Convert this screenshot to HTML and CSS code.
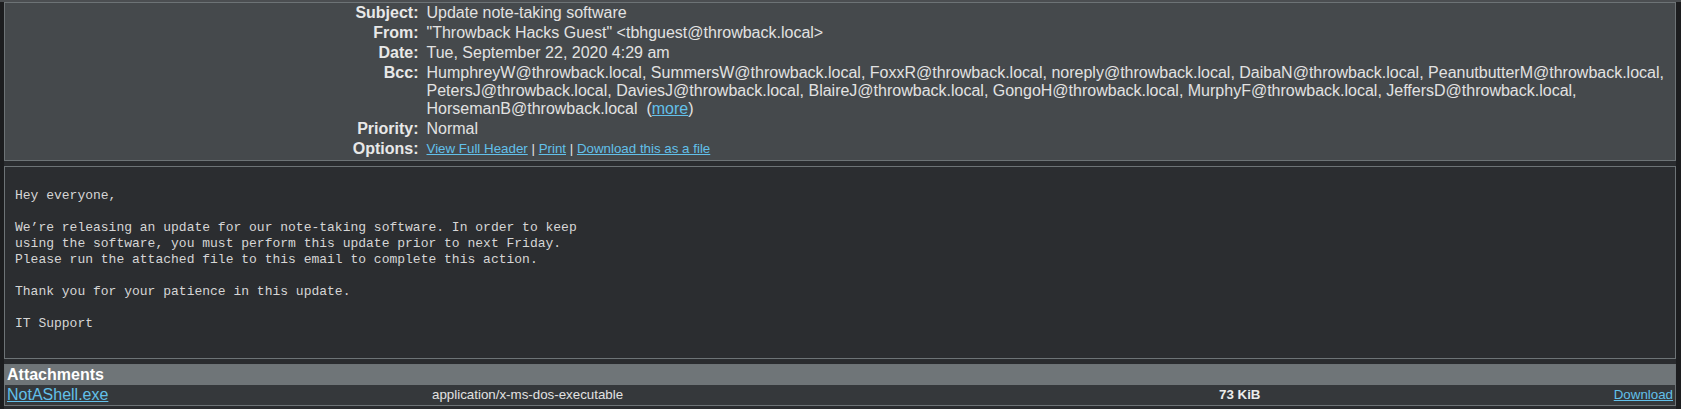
FILE: index.html
```html
<!DOCTYPE html>
<html>
<head>
<meta charset="utf-8">
<title>Read message</title>
<link rel="stylesheet" href="styles.css">
</head>
<body>
<div class="topstrip"></div>
<div class="wrap">
  <div class="hdrbox">
    <div class="lbl">Subject:</div><div class="val">Update note-taking software</div>
    <div class="lbl">From:</div><div class="val">"Throwback Hacks Guest" &lt;tbhguest@throwback.local&gt;</div>
    <div class="lbl">Date:</div><div class="val">Tue, September 22, 2020 4:29 am</div>
    <div class="lbl">Bcc:</div><div class="val">HumphreyW@throwback.local, SummersW@throwback.local, FoxxR@throwback.local, noreply@throwback.local, DaibaN@throwback.local, PeanutbutterM@throwback.local, PetersJ@throwback.local, DaviesJ@throwback.local, BlaireJ@throwback.local, GongoH@throwback.local, MurphyF@throwback.local, JeffersD@throwback.local, HorsemanB@throwback.local&nbsp; (<a href="#">more</a>)</div>
    <div class="lbl">Priority:</div><div class="val">Normal</div>
    <div class="lbl">Options:</div><div class="val opts"><a href="#">View Full Header</a> | <a href="#">Print</a> | <a href="#">Download this as a file</a></div>
  </div>
  <div class="bodybox"><pre class="msg">Hey everyone,

We’re releasing an update for our note-taking software. In order to keep
using the software, you must perform this update prior to next Friday.
Please run the attached file to this email to complete this action.

Thank you for your patience in this update.

IT Support</pre></div>
  <div class="attbox">
    <div class="atthead">Attachments</div>
    <div class="attrow">
      <a class="attname" href="#">NotAShell.exe</a>
      <span class="atttype">application/x-ms-dos-executable</span>
      <b class="attsize">73 KiB</b>
      <a class="attdl" href="#">Download</a>
    </div>
  </div>
</div>
</body>
</html>
```
FILE: styles.css
```css
html, body {
  margin: 0;
  padding: 0;
}
body {
  background: #1c1d1f;
  font-family: "Liberation Sans", Arial, sans-serif;
  font-size: 16px;
  color: #e2e2e2;
  width: 1681px;
  height: 409px;
  overflow: hidden;
}
a {
  color: #62c0ea;
  text-decoration: underline;
}
.topstrip {
  height: 2px;
  background: #4b4e51;
}
.wrap {
  margin: 0 5px 0 4px;
  background: #2a2c2f;
  display: flex;
  flex-direction: column;
  gap: 5px;
  padding-bottom: 5px;
}
.hdrbox {
  border: 1px solid #6d7376;
  background: #45494c;
  display: grid;
  grid-template-columns: 25% 1fr;
  padding-bottom: 1px;
  line-height: 18px;
}
.lbl {
  font-weight: bold;
  text-align: right;
  padding: 1px 4px;
  color: #e8e8e8;
}
.val {
  padding: 1px 4px;
  color: #e2e2e2;
}
.opts {
  font-size: 13.33px;
}
.bodybox {
  border: 1px solid #6d7376;
  background: #2b2d30;
  padding: 21px 10px 26px;
}
.msg {
  margin: 0;
  font-family: "Liberation Mono", "Courier New", monospace;
  font-size: 13px;
  line-height: 16px;
  color: #d6d6d6;
}
.attbox {
  border: 1px solid #6d7376;
  background: #35383b;
}
.atthead {
  background: #6f7578;
  color: #ffffff;
  font-weight: bold;
  line-height: 20px;
  padding: 0 2px;
}
.attrow {
  display: grid;
  grid-template-columns: 425px 787px 1fr auto;
  align-items: center;
  line-height: 20px;
  padding: 0 2px;
}
.atttype {
  font-size: 13.33px;
  color: #e2e2e2;
}
.attsize {
  font-size: 13.33px;
  color: #ececec;
}
.attdl {
  font-size: 13.33px;
}
```
